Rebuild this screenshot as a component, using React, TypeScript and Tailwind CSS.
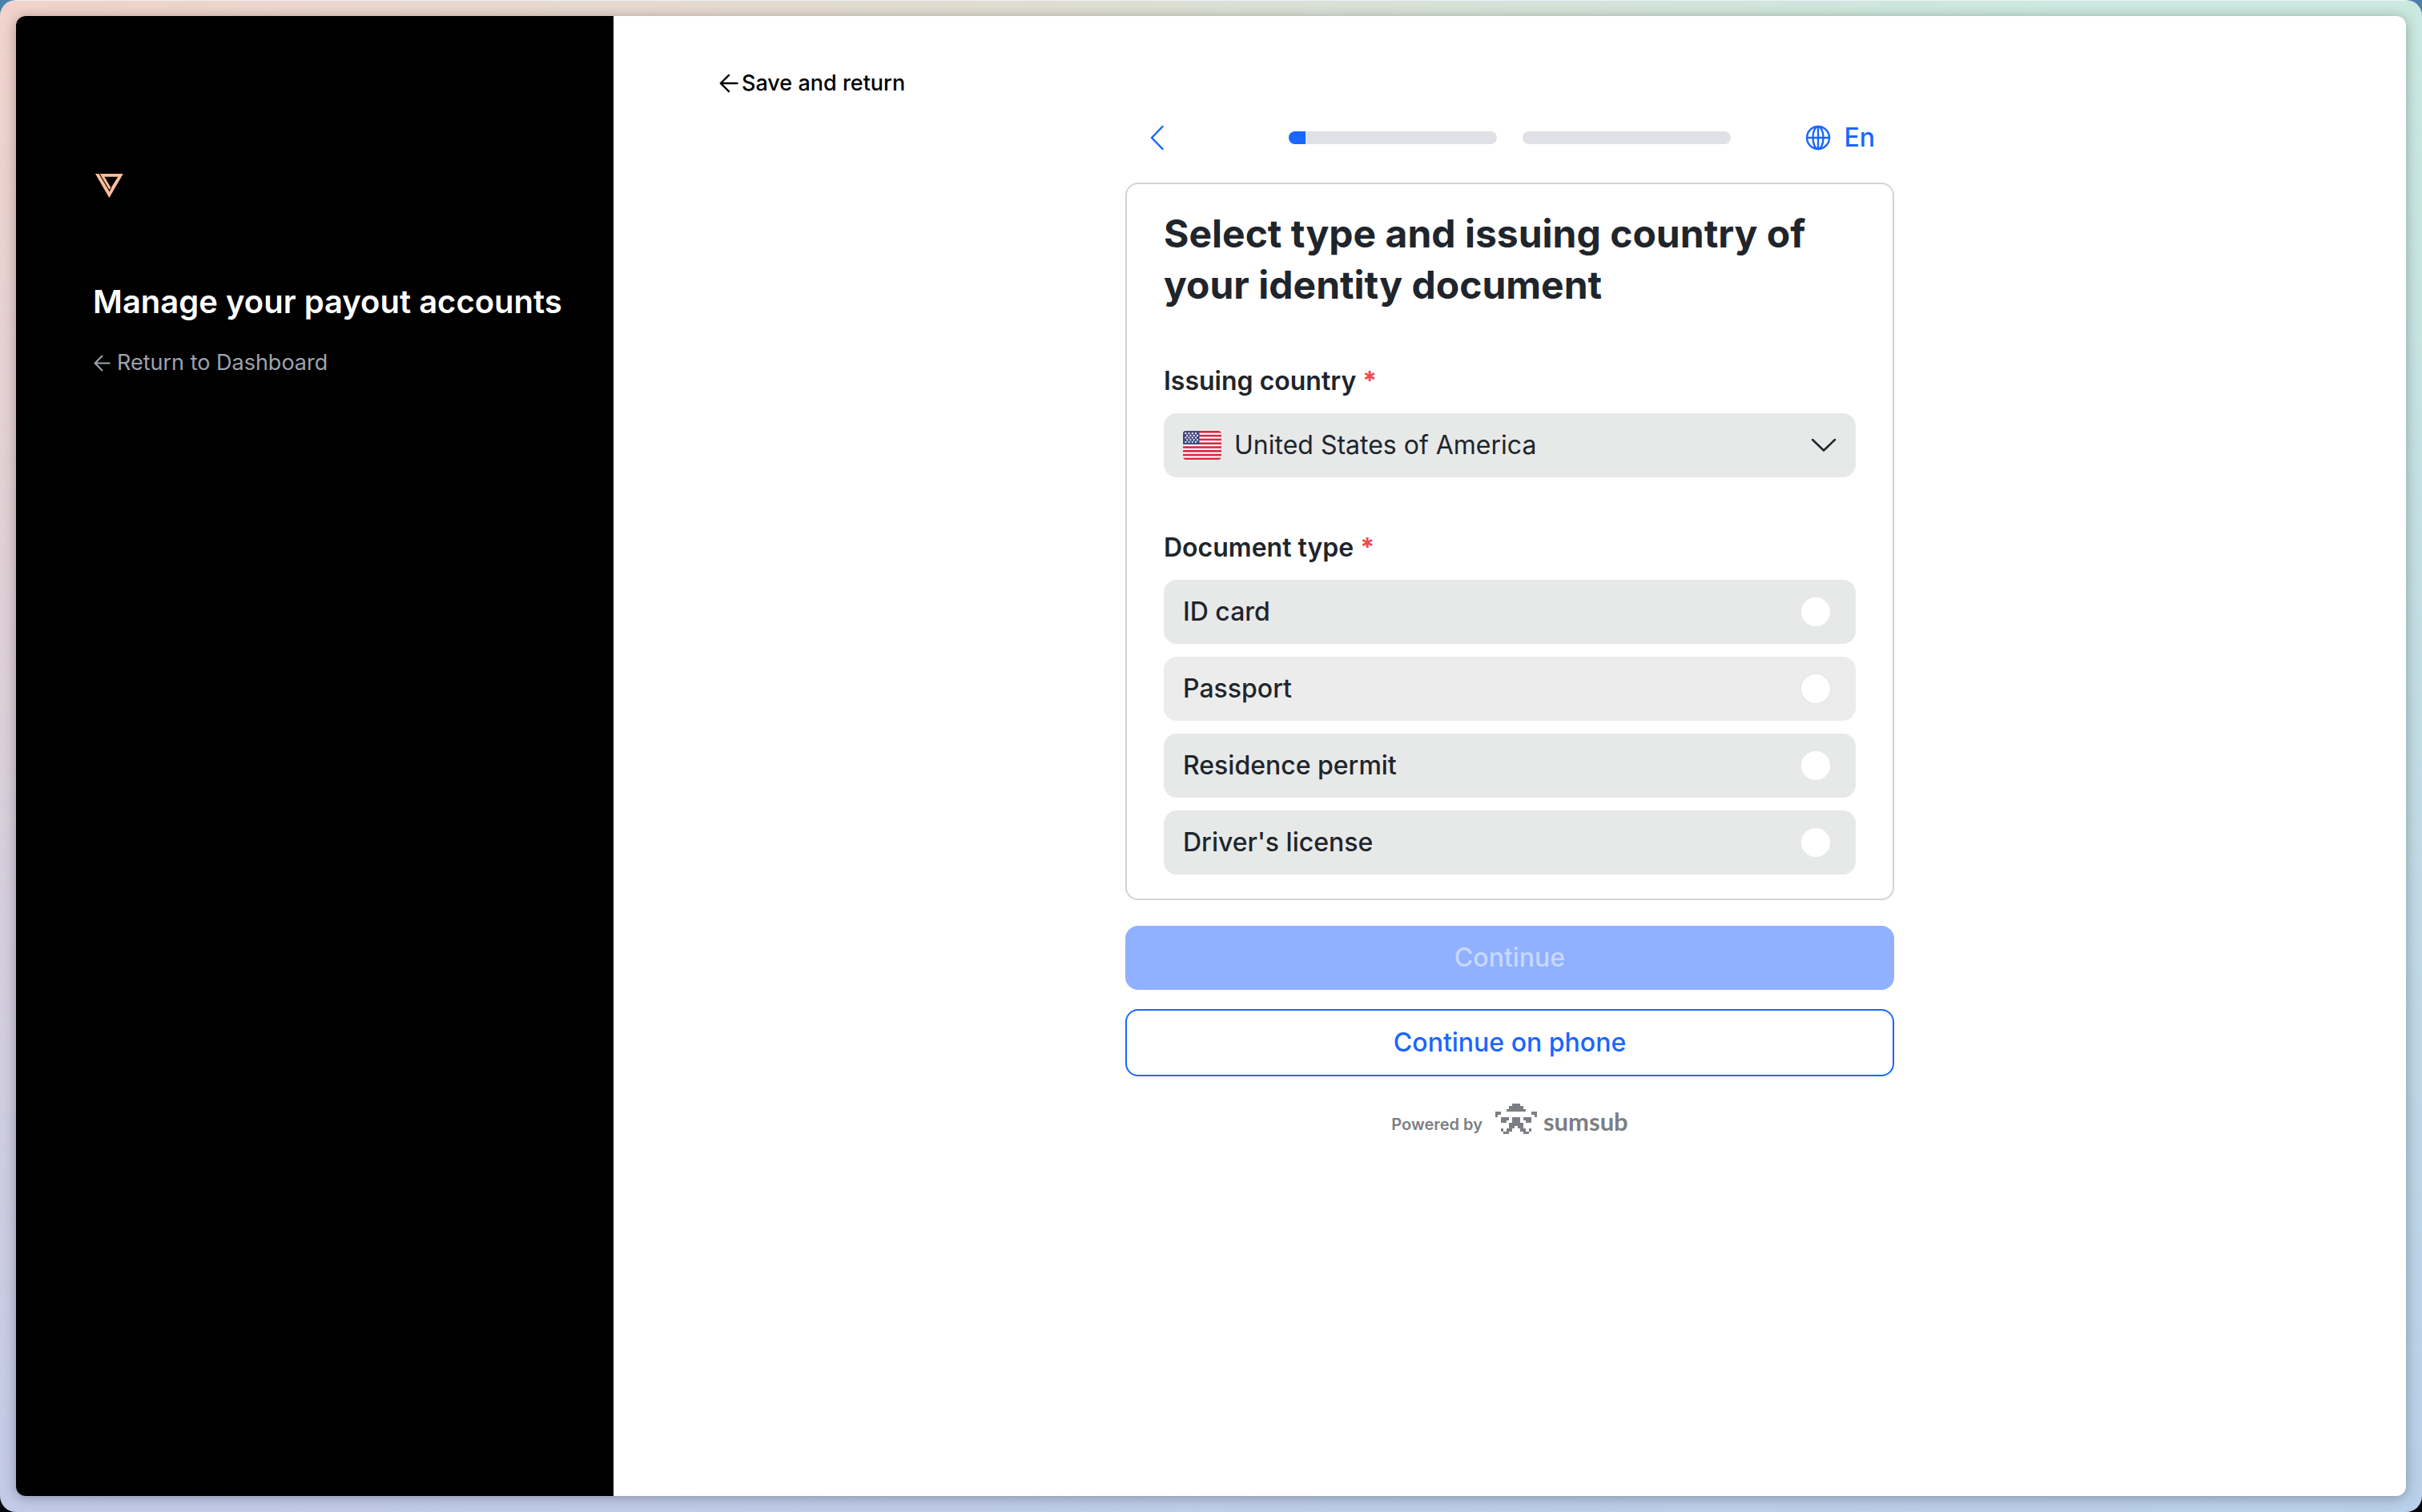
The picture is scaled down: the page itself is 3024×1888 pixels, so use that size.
import { useState } from "react";

const LOGO_CELLS: [number, number, number][] = [
  [6, 0, 3],
  [5, 1, 5],
  [4, 2, 7],
  [0, 3, 2],
  [13, 3, 2],
  [0, 4, 1],
  [14, 4, 1],
  [2, 5, 3],
  [6, 5, 3],
  [10, 5, 3],
  [2, 6, 2],
  [6, 6, 3],
  [11, 6, 2],
  [5, 7, 5],
  [5, 8, 2],
  [8, 8, 2],
  [2, 9, 1],
  [4, 9, 2],
  [9, 9, 2],
  [12, 9, 1],
  [3, 10, 2],
  [10, 10, 2],
];

const DOCUMENT_TYPES = [
  { id: "id-card", label: "ID card" },
  { id: "passport", label: "Passport" },
  { id: "residence", label: "Residence permit" },
  { id: "license", label: "Driver's license" },
];

function BrandMark() {
  return (
    <svg width="36" height="32" viewBox="0 0 36 32" aria-hidden="true">
      <path d="M0 1H34.800L17.400 31Z M11.300 4.700L19.600 18.600L28.300 4.700Z" fill="#fdbd98" fillRule="evenodd" />
      <path d="M4.800 0.500L17.600 22.400L19.800 18" stroke="#000" strokeWidth="1.100" fill="none" />
    </svg>
  );
}

function ArrowLeft({ size, stroke }: { size: number; stroke: number }) {
  return (
    <svg width={size} height={size} viewBox="0 0 24 24" fill="none" stroke="currentColor" strokeWidth={stroke} strokeLinecap="round" strokeLinejoin="round" aria-hidden="true">
      <path d="M22.5 12H1.8M12 1.8L1.8 12L12 22.2" />
    </svg>
  );
}

function Flag() {
  const stars = [];
  for (let r = 0; r < 5; r++) {
    for (let c = 0; c < 4; c++) {
      stars.push(<circle key={`${r}-${c}`} cx={3.4 + c * 4.2 + (r % 2) * 1.9} cy={3.2 + r * 2.7} r="1.1" fill="#fff" />);
    }
  }
  return (
    <svg width="48" height="36" viewBox="0 0 48 36" aria-hidden="true">
      <clipPath id="flag-shape">
        <rect width="48" height="36" rx="4" />
      </clipPath>
      <g clipPath="url(#flag-shape)">
        <rect width="48" height="36" fill="#fff" />
        {[0, 1, 2, 3, 4, 5, 6, 7].map((i) => (
          <rect key={i} y={i * 4.8} width="48" height="2.6" fill="#d8283f" />
        ))}
        <rect width="20.5" height="17" fill="#46467f" />
        {stars}
      </g>
    </svg>
  );
}

function SumsubMark() {
  return (
    <svg width="52" height="38" viewBox="0 0 15 11" fill="currentColor" shapeRendering="crispEdges" preserveAspectRatio="none" aria-hidden="true">
      {LOGO_CELLS.map(([x, y, w]) => (
        <rect key={`${x}-${y}`} x={x} y={y} width={w} height="1" />
      ))}
    </svg>
  );
}

function Required() {
  return <span className="font-bold text-[#f5484d]">*</span>;
}

export default function App() {
  const [doc, setDoc] = useState("");

  return (
    <div className="flex min-h-screen bg-[linear-gradient(to_bottom,#4c82a8,#02060c_50%)] font-['Inter',sans-serif]">
      <div className="relative isolate flex flex-1 overflow-hidden rounded-[20px] border-t border-t-white/70 bg-[linear-gradient(to_right,#c3cbe8,#bad0ea)] px-5 pt-[19px] pb-5">
        <div className="absolute inset-0 -z-10 bg-[linear-gradient(to_right,#f1d3cb,#e1ddd1_40%,#cbe9e0_85%)] mask-[linear-gradient(to_bottom,black,transparent)]" />
        <div className="flex flex-1 overflow-hidden rounded-xl bg-white shadow-[0_2px_16px_rgba(0,0,0,0.3)]">
          <aside className="w-1/4 bg-black px-24 pt-[196px] text-white">
            <div className="pl-[3px]">
              <BrandMark />
            </div>
            <h1 className="mt-[105px] text-[40px] leading-12 font-semibold whitespace-nowrap">Manage your payout accounts</h1>
            <a href="#dashboard" className="mt-8 flex items-center gap-2 pl-px text-[27px] leading-10 text-[#9ca3af]">
              <ArrowLeft size={21} stroke={2.4} />
              Return to Dashboard
            </a>
          </aside>

          <main className="flex flex-1 flex-col px-32 pt-16 text-[32px] text-[#20252c]">
            <a href="#save" className="flex items-center gap-1 self-start pl-1 text-[27px] leading-10 font-medium text-black">
              <ArrowLeft size={24} stroke={2.4} />
              Save and return
            </a>

            <div className="mx-auto mt-7 w-full max-w-[960px]">
              <header className="flex h-10 items-center justify-between px-6">
                <button type="button" aria-label="Back" className="flex size-10 items-center text-[#1a66ff]">
                  <svg width="24" height="32" viewBox="0 0 24 32" fill="none" stroke="currentColor" strokeWidth="2.5" strokeLinecap="round" strokeLinejoin="round" aria-hidden="true">
                    <path d="M22.500 2L9 16L22.500 30" />
                  </svg>
                </button>
                <div className="ml-[46px] flex gap-8">
                  <div role="progressbar" aria-label="Step 1" aria-valuenow={8} className="h-4 w-[260px] overflow-hidden rounded-full bg-[#e0e1e6]">
                    <div className="h-full w-[8%] bg-[#1a66ff]" />
                  </div>
                  <div role="progressbar" aria-label="Step 2" aria-valuenow={0} className="h-4 w-[260px] rounded-full bg-[#e0e1e6]" />
                </div>
                <button type="button" className="flex items-center gap-4 font-medium text-[#1a66ff]">
                  <svg width="32" height="32" viewBox="0 0 32 32" fill="none" stroke="currentColor" strokeWidth="2.4" aria-hidden="true">
                    <circle cx="16" cy="16" r="14" />
                    <ellipse cx="16" cy="16" rx="6.5" ry="14" />
                    <path d="M2 16H30M16 2V30" />
                  </svg>
                  En
                </button>
              </header>

              <section className="mt-9 rounded-2xl border-2 border-[#d2d3d4] px-[46px] py-[30px]">
                <h2 className="text-[48px] leading-16 font-bold">Select type and issuing country of your identity document</h2>

                <label htmlFor="country" className="mt-16 block leading-12 font-semibold">
                  Issuing country <Required />
                </label>
                <div className="relative mt-4">
                  <select id="country" className="block h-20 w-full appearance-none rounded-2xl bg-[#e7e9e8] px-[88px]">
                    <option>United States of America</option>
                  </select>
                  <div className="pointer-events-none absolute inset-0 flex items-center justify-between px-6">
                    <Flag />
                    <svg width="32" height="18" viewBox="0 0 32 18" fill="none" stroke="currentColor" strokeWidth="2.5" strokeLinecap="round" strokeLinejoin="round" aria-hidden="true">
                      <path d="M2 2L16 15.500L30 2" />
                    </svg>
                  </div>
                </div>

                <fieldset className="mt-16">
                  <legend className="leading-12 font-semibold">
                    Document type <Required />
                  </legend>
                  <div className="mt-4 flex flex-col gap-4">
                    {DOCUMENT_TYPES.map(({ id, label }) => (
                      <label
                        key={id}
                        htmlFor={id}
                        className={`flex h-20 items-center justify-between rounded-2xl pr-[30px] pl-6 font-medium ${id === "passport" ? "bg-[#ececec]" : "bg-[#e7e9e8]"}`}
                      >
                        {label}
                        <input
                          id={id}
                          type="radio"
                          name="document"
                          checked={doc === id}
                          onChange={() => setDoc(id)}
                          className="size-10 appearance-none rounded-full border-2 border-[#e7e9e8] bg-white checked:border-[12px] checked:border-[#1a66ff]"
                        />
                      </label>
                    ))}
                  </div>
                </fieldset>
              </section>

              <button type="button" disabled={!doc} className="mt-8 h-20 w-full rounded-2xl bg-[#1a66ff] font-medium text-white disabled:bg-[#91b0ff] disabled:text-[#c8d8ff]">
                Continue
              </button>
              <button type="button" className="mt-6 h-[84px] w-full rounded-2xl border-2 border-[#1a66ff] bg-white font-medium text-[#1a66ff]">
                Continue on phone
              </button>

              <footer className="mt-[34px] flex h-[38px] items-end justify-center text-[#7b7f84]">
                <span className="text-xl leading-6 font-semibold">Powered by</span>
                <a href="#sumsub" className="ml-4 flex items-end gap-2">
                  <SumsubMark />
                  <span className="font-['Lato',sans-serif] text-[31px] leading-8 font-bold">sumsub</span>
                </a>
              </footer>
            </div>
          </main>
        </div>
      </div>
    </div>
  );
}
